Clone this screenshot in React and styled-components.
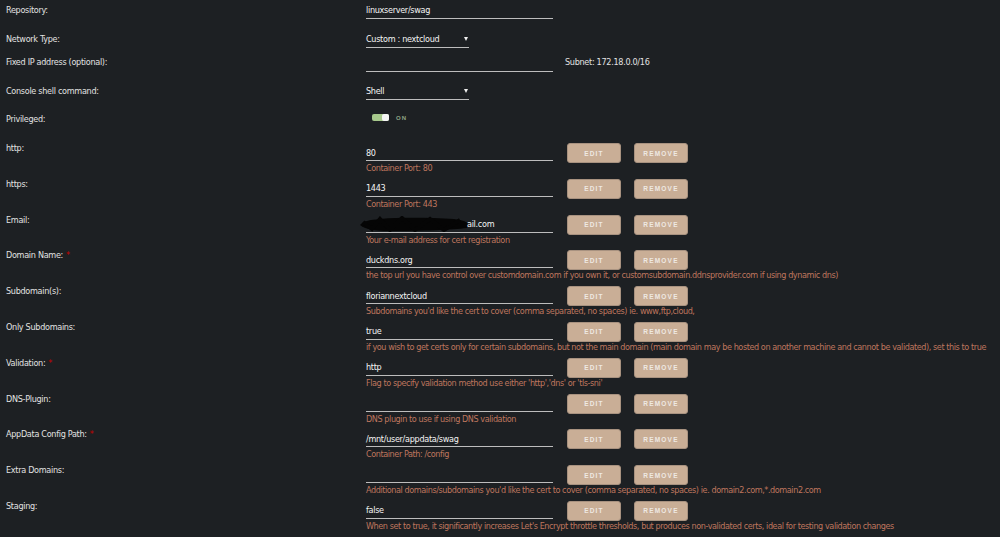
import styled, { createGlobalStyle } from 'styled-components';

const GlobalStyle = createGlobalStyle`
    html, body {
        margin: 0;
        padding: 0;
        background: #1d2023;
    }
    body {
        font-family: "DejaVu Sans Condensed", "Liberation Sans", sans-serif;
        font-size: 9px;
        letter-spacing: -0.3px;
        color: #e2e2e2;
    }
`;

const ports = [
    { label: 'http:', value: '80', help: 'Container Port: 80' },
    { label: 'https:', value: '1443', help: 'Container Port: 443' },
    { label: 'Email:', value: 'ail.com', hidden: true, help: 'Your e-mail address for cert registration' },
    { label: 'Domain Name:', required: true, value: 'duckdns.org', help: 'the top url you have control over customdomain.com if you own it, or customsubdomain.ddnsprovider.com if using dynamic dns)' },
    { label: 'Subdomain(s):', value: 'floriannextcloud', help: "Subdomains you'd like the cert to cover (comma separated, no spaces) ie. www,ftp,cloud," },
    { label: 'Only Subdomains:', value: 'true', help: 'if you wish to get certs only for certain subdomains, but not the main domain (main domain may be hosted on another machine and cannot be validated), set this to true' },
    { label: 'Validation:', required: true, value: 'http', help: "Flag to specify validation method use either 'http','dns' or 'tls-sni'" },
    { label: 'DNS-Plugin:', value: '', help: 'DNS plugin to use if using DNS validation' },
    { label: 'AppData Config Path:', required: true, value: '/mnt/user/appdata/swag', help: 'Container Path: /config' },
    { label: 'Extra Domains:', value: '', help: "Additional domains/subdomains you'd like the cert to cover (comma separated, no spaces) ie. domain2.com,*.domain2.com" },
    { label: 'Staging:', value: 'false', help: "When set to true, it significantly increases Let's Encrypt throttle thresholds, but produces non-validated certs, ideal for testing validation changes" },
];

function Scribble() {
    // marker scribble hiding the mailbox name
    return (
        <ScribbleSvg width="108" height="16" viewBox="0 0 108 16">
            <path d="M0 9 C 3 5, 9 4, 20 3 C 45 1, 72 2, 94 3 C 101 4, 106 5, 108 8 L 107 12 C 92 14, 62 15, 30 15 C 14 15, 5 13, 0 9 Z" fill="#050505" />
            <path d="M3 6 L 12 13 L 20 3 L 30 14 L 42 2 L 55 14 L 70 3 L 84 14 L 100 4" stroke="#050505" strokeWidth="4" fill="none" />
        </ScribbleSvg>
    );
}

export default function App() {
    return (
        <Page>
            <GlobalStyle />
            <TopRow h={29}>
                <Label>Repository:</Label>
                <Field>linuxserver/swag</Field>
            </TopRow>
            <TopRow h={23}>
                <Label>Network Type:</Label>
                <Field narrow>
                    Custom : nextcloud
                    <Arrow />
                </Field>
            </TopRow>
            <TopRow h={29}>
                <Label>Fixed IP address (optional):</Label>
                <Field tall />
                <Note>Subnet: 172.18.0.0/16</Note>
            </TopRow>
            <TopRow h={28}>
                <Label>Console shell command:</Label>
                <Field narrow>
                    Shell
                    <Arrow />
                </Field>
            </TopRow>
            <TopRow h={34}>
                <Label>Privileged:</Label>
                <SwitchWrap>
                    <Track><Knob /></Track>
                    <SwitchText>ON</SwitchText>
                </SwitchWrap>
            </TopRow>

            {ports.map((p) => (
                <PortRow key={p.label}>
                    <PortLabel>
                        {p.label}
                        {p.required && <Star>*</Star>}
                    </PortLabel>
                    <PortField>
                        {p.hidden && <Scribble />}
                        {p.value}
                    </PortField>
                    <Buttons>
                        <ActionButton>EDIT</ActionButton>
                        <ActionButton>REMOVE</ActionButton>
                    </Buttons>
                    <Help>{p.help}</Help>
                </PortRow>
            ))}
        </Page>
    );
}

const Page = styled.div`
    min-height: 100vh;
    padding-left: 6px;
    overflow: hidden;
`;

const TopRow = styled.div`
    display: grid;
    grid-template-columns: 360px 187px 1fr;
    align-items: start;
    height: ${(props) => props.h}px;
`;

const Label = styled.div`
    padding-top: 4px;
    line-height: 12px;
    color: #e2e2e2;
    white-space: nowrap;
`;

const Field = styled.div`
    position: relative;
    box-sizing: border-box;
    width: ${(props) => (props.narrow ? '103px' : '187px')};
    height: ${(props) => (props.tall ? '20px' : '19px')};
    padding-top: 4px;
    line-height: 12px;
    color: #f4f4f4;
    border-bottom: 1px solid #bdbdbd;
    white-space: nowrap;
`;

const Arrow = styled.span`
    position: absolute;
    right: 1px;
    top: 8px;
    width: 0;
    height: 0;
    border-left: 2.5px solid transparent;
    border-right: 2.5px solid transparent;
    border-top: 4px solid #f0f0f0;
`;

const Note = styled.div`
    margin-left: 12px;
    padding-top: 4px;
    line-height: 12px;
    color: #e2e2e2;
    white-space: nowrap;
`;

const SwitchWrap = styled.div`
    display: flex;
    align-items: center;
    gap: 7px;
    margin-left: 6px;
    padding-top: 5px;
`;

const Track = styled.span`
    display: flex;
    justify-content: flex-end;
    width: 17px;
    height: 7px;
    border-radius: 2px;
    background: #a7c98c;
`;

const Knob = styled.span`
    width: 7px;
    height: 7px;
    border-radius: 2px;
    background: #f6f6f6;
`;

const SwitchText = styled.span`
    font-family: "Liberation Sans", sans-serif;
    font-size: 6px;
    font-weight: bold;
    letter-spacing: 1px;
    color: #8fa383;
`;

const PortRow = styled.div`
    display: grid;
    grid-template-columns: 360px 187px 1fr;
    grid-template-rows: 20px 15.8px;
    height: 35.8px;
`;

const PortLabel = styled.div`
    grid-column: 1;
    grid-row: 1;
    line-height: 10px;
    color: #e2e2e2;
    white-space: nowrap;
`;

const Star = styled.span`
    margin-left: 3px;
    color: #c40000;
`;

const PortField = styled.div`
    grid-column: 2;
    grid-row: 1;
    display: flex;
    align-items: center;
    box-sizing: border-box;
    height: 18px;
    padding-top: 2px;
    line-height: 12px;
    color: #f4f4f4;
    border-bottom: 1px solid #bdbdbd;
    white-space: nowrap;
`;

const ScribbleSvg = styled.svg`
    display: block;
    flex-shrink: 0;
    margin-left: -6px;
    margin-right: -1px;
`;

const Buttons = styled.div`
    grid-column: 3;
    grid-row: 1;
    display: flex;
    gap: 13px;
    margin-left: 14px;
`;

const ActionButton = styled.button`
    box-sizing: border-box;
    width: 54px;
    height: 20px;
    padding: 0;
    border: 1px solid #a89280;
    border-radius: 3px;
    background: #c9ae96;
    color: #efe9e3;
    font-family: "Liberation Sans", sans-serif;
    font-size: 6.5px;
    font-weight: bold;
    letter-spacing: 1.2px;
`;

const Help = styled.div`
    grid-column: 2 / 4;
    grid-row: 2;
    margin-top: -1px;
    line-height: 12px;
    letter-spacing: -0.42px;
    color: #bf765e;
    white-space: nowrap;
`;
